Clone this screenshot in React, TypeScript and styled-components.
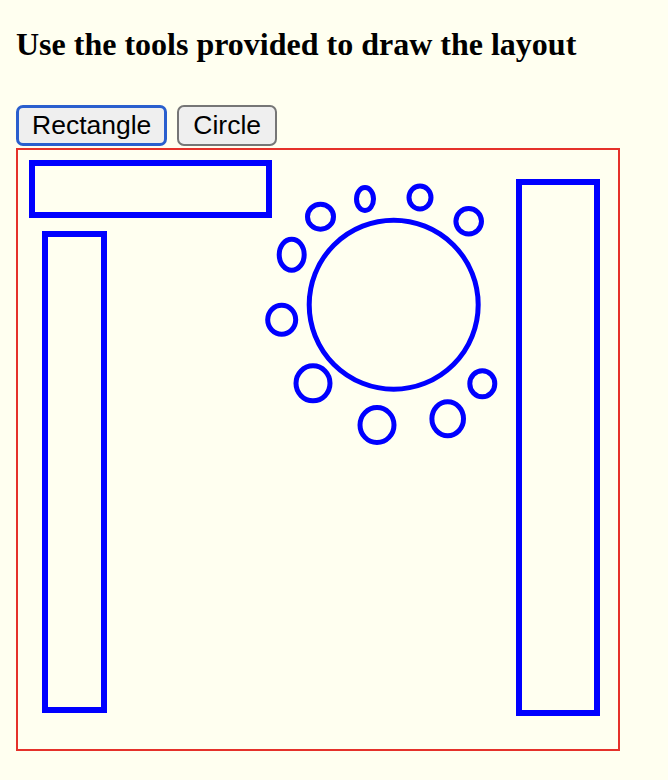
import React, { useState } from 'react';
import styled, { createGlobalStyle } from 'styled-components';

type Tool = 'rectangle' | 'circle';

interface Rect {
    x: number;
    y: number;
    w: number;
    h: number;
}

interface Ellipse {
    cx: number;
    cy: number;
    rx: number;
    ry: number;
}

const rects: Rect[] = [
    { x: 14, y: 13, w: 237, h: 52 },
    { x: 27, y: 84, w: 59, h: 476 },
    { x: 501, y: 32, w: 78, h: 531 },
];

const ellipses: Ellipse[] = [
    { cx: 375.7, cy: 154.7, rx: 84.5, ry: 84.5 },
    { cx: 347, cy: 49, rx: 8.5, ry: 11.5 },
    { cx: 402, cy: 47.5, rx: 11, ry: 11.5 },
    { cx: 302.5, cy: 66.7, rx: 13, ry: 12.5 },
    { cx: 450.7, cy: 71.3, rx: 12.8, ry: 12.8 },
    { cx: 273.7, cy: 104.7, rx: 12.5, ry: 15.5 },
    { cx: 263.7, cy: 169.7, rx: 14, ry: 14.5 },
    { cx: 295, cy: 233.3, rx: 17, ry: 17.5 },
    { cx: 359, cy: 275, rx: 17, ry: 17.5 },
    { cx: 429.7, cy: 268.8, rx: 15.8, ry: 17 },
    { cx: 464.3, cy: 233.8, rx: 12.5, ry: 13 },
];

const GlobalStyle = createGlobalStyle`
    html, body {
        margin: 0;
        background-color: #fffff0;
    }
`;

const Page = styled.div`
    display: flex;
    flex-direction: column;
    align-items: flex-start;
    padding: 26px 16px 0 16px;
    font-family: "Liberation Serif", "Times New Roman", serif;
`;

const Title = styled.h4`
    margin: 0 0 42px 0;
    font-size: 32px;
    line-height: 37px;
    font-weight: bold;
    color: #000;
`;

const Toolbar = styled.div`
    display: flex;
    gap: 10px;
    margin-bottom: 2px;
`;

const ToolButton = styled.button<{ $active: boolean }>`
    height: 41px;
    padding: ${(props) => (props.$active ? '0 13px' : '0 14px')};
    font-family: "Liberation Sans", Arial, sans-serif;
    font-size: 26.5px;
    color: #000;
    background-color: #efefef;
    border: ${(props) => (props.$active ? '3px solid #2a5fce' : '2px solid #767676')};
    border-radius: 7px;
    cursor: pointer;
`;

const Canvas = styled.div`
    width: 600px;
    height: 599px;
    border: 2px solid #e5312a;
`;

const Board = styled.svg`
    display: block;
    width: 600px;
    height: 599px;
`;

const App: React.FC = () => {
    const [tool, setTool] = useState<Tool>('rectangle');

    return (
        <>
            <GlobalStyle />
            <Page>
                <Title>Use the tools provided to draw the layout</Title>
                <Toolbar>
                    <ToolButton $active={tool === 'rectangle'} onClick={() => setTool('rectangle')}>
                        Rectangle
                    </ToolButton>
                    <ToolButton $active={tool === 'circle'} onClick={() => setTool('circle')}>
                        Circle
                    </ToolButton>
                </Toolbar>
                <Canvas>
                    <Board viewBox="0 0 600 599">
                        {rects.map((r, i) => (
                            <rect key={`r${i}`} x={r.x} y={r.y} width={r.w} height={r.h} fill="none" stroke="#0000ff" strokeWidth={6} />
                        ))}
                        {ellipses.map((e, i) => (
                            <ellipse key={`e${i}`} cx={e.cx} cy={e.cy} rx={e.rx} ry={e.ry} fill="none" stroke="#0000ff" strokeWidth={5} />
                        ))}
                    </Board>
                </Canvas>
            </Page>
        </>
    );
};

export default App;
